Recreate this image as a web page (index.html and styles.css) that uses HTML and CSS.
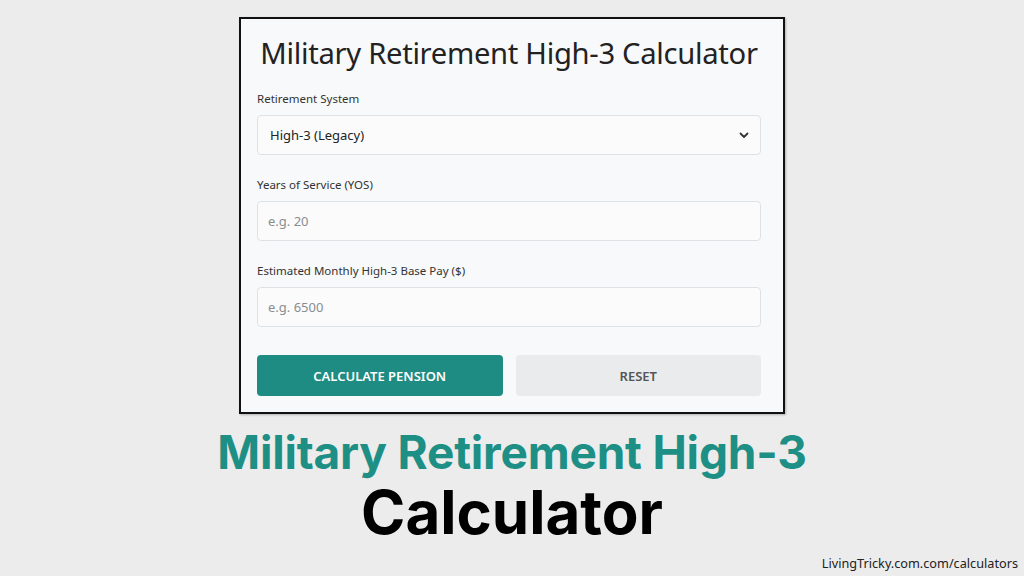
FILE: index.html
```html
<!DOCTYPE html>
<html>
<head>
<meta charset="utf-8">
<link rel="stylesheet" href="styles.css">
</head>
<body>
<div class="page">
  <div class="card">
    <h1 class="card-title">Military Retirement High-3 Calculator</h1>
    <div class="field">
      <label class="label">Retirement System</label>
      <div class="control select">
        <span class="value">High-3 (Legacy)</span>
        <svg class="chev" width="10" height="7" viewBox="0 0 10 7"><path d="M1.5 1.5 L5 5 L8.5 1.5" fill="none" stroke="#333" stroke-width="1.8" stroke-linecap="round" stroke-linejoin="round"/></svg>
      </div>
    </div>
    <div class="field">
      <label class="label">Years of Service (YOS)</label>
      <div class="control"><span class="ph">e.g. 20</span></div>
    </div>
    <div class="field">
      <label class="label">Estimated Monthly High-3 Base Pay ($)</label>
      <div class="control"><span class="ph">e.g. 6500</span></div>
    </div>
    <div class="buttons">
      <div class="btn btn-primary">CALCULATE PENSION</div>
      <div class="btn btn-reset">RESET</div>
    </div>
  </div>
  <div class="headline">
    <div class="hl-teal">Military Retirement High-3</div>
    <div class="hl-black">Calculator</div>
  </div>
  <div class="footer">LivingTricky.com.com/calculators</div>
</div>
</body>
</html>
```
FILE: styles.css
```css
html, body {
  margin: 0;
  padding: 0;
  background: #ececec;
}
.page {
  width: 1024px;
  height: 576px;
  display: flex;
  flex-direction: column;
  align-items: center;
  font-family: "Noto Sans", "Open Sans", sans-serif;
  box-sizing: border-box;
  padding-top: 17px;
}
.card {
  width: 546px;
  box-sizing: border-box;
  border: 2px solid #111;
  background: #f8f9fa;
  padding: 14px 22px 16px 16px;
  box-shadow: 1px 1px 2px rgba(0,0,0,0.25);
  display: flex;
  flex-direction: column;
}
.card-title {
  margin: 0 0 18px 0;
  text-align: center;
  font-size: 29.2px;
  font-weight: 400;
  color: #222;
  line-height: 40px;
  letter-spacing: -0.3px;
  white-space: nowrap;
}
.field {
  display: flex;
  flex-direction: column;
  margin-bottom: 22px;
}
.label {
  font-size: 11.5px;
  color: #333;
  line-height: 16px;
  margin-bottom: 8px;
}
.control {
  height: 40px;
  box-sizing: border-box;
  border: 1px solid #dfe2e5;
  border-radius: 4px;
  background: #fbfbfc;
  display: flex;
  align-items: center;
  padding: 0 11px 0 10px;
  font-size: 13px;
}
.select {
  justify-content: space-between;
}
.select .value { padding-left: 2px; }
.value { color: #222; }
.ph { color: #8a8d90; }
.buttons {
  display: flex;
  gap: 13px;
  margin-top: 6px;
}
.btn {
  flex: 1;
  height: 41px;
  border-radius: 4px;
  display: flex;
  align-items: center;
  justify-content: center;
  font-size: 13px;
  font-weight: 600;
}
.btn-primary {
  background: #1e8c82;
  color: #fff;
}
.btn-reset {
  background: #e9ebec;
  color: #555;
}
.headline {
  display: flex;
  flex-direction: column;
  align-items: center;
  margin-top: 11px;
  font-family: "Inter", "Lato", sans-serif;
  font-weight: 700;
}
.hl-teal {
  color: #1e8f85;
  font-size: 46px;
  line-height: 54px;
  letter-spacing: -0.2px;
}
.hl-black {
  color: #000;
  font-size: 60px;
  line-height: 66px;
}
.footer {
  align-self: flex-end;
  margin-top: auto;
  margin-right: 6px;
  margin-bottom: 4px;
  font-size: 12.7px;
  color: #222;
  font-family: "Noto Sans", sans-serif;
}
```
